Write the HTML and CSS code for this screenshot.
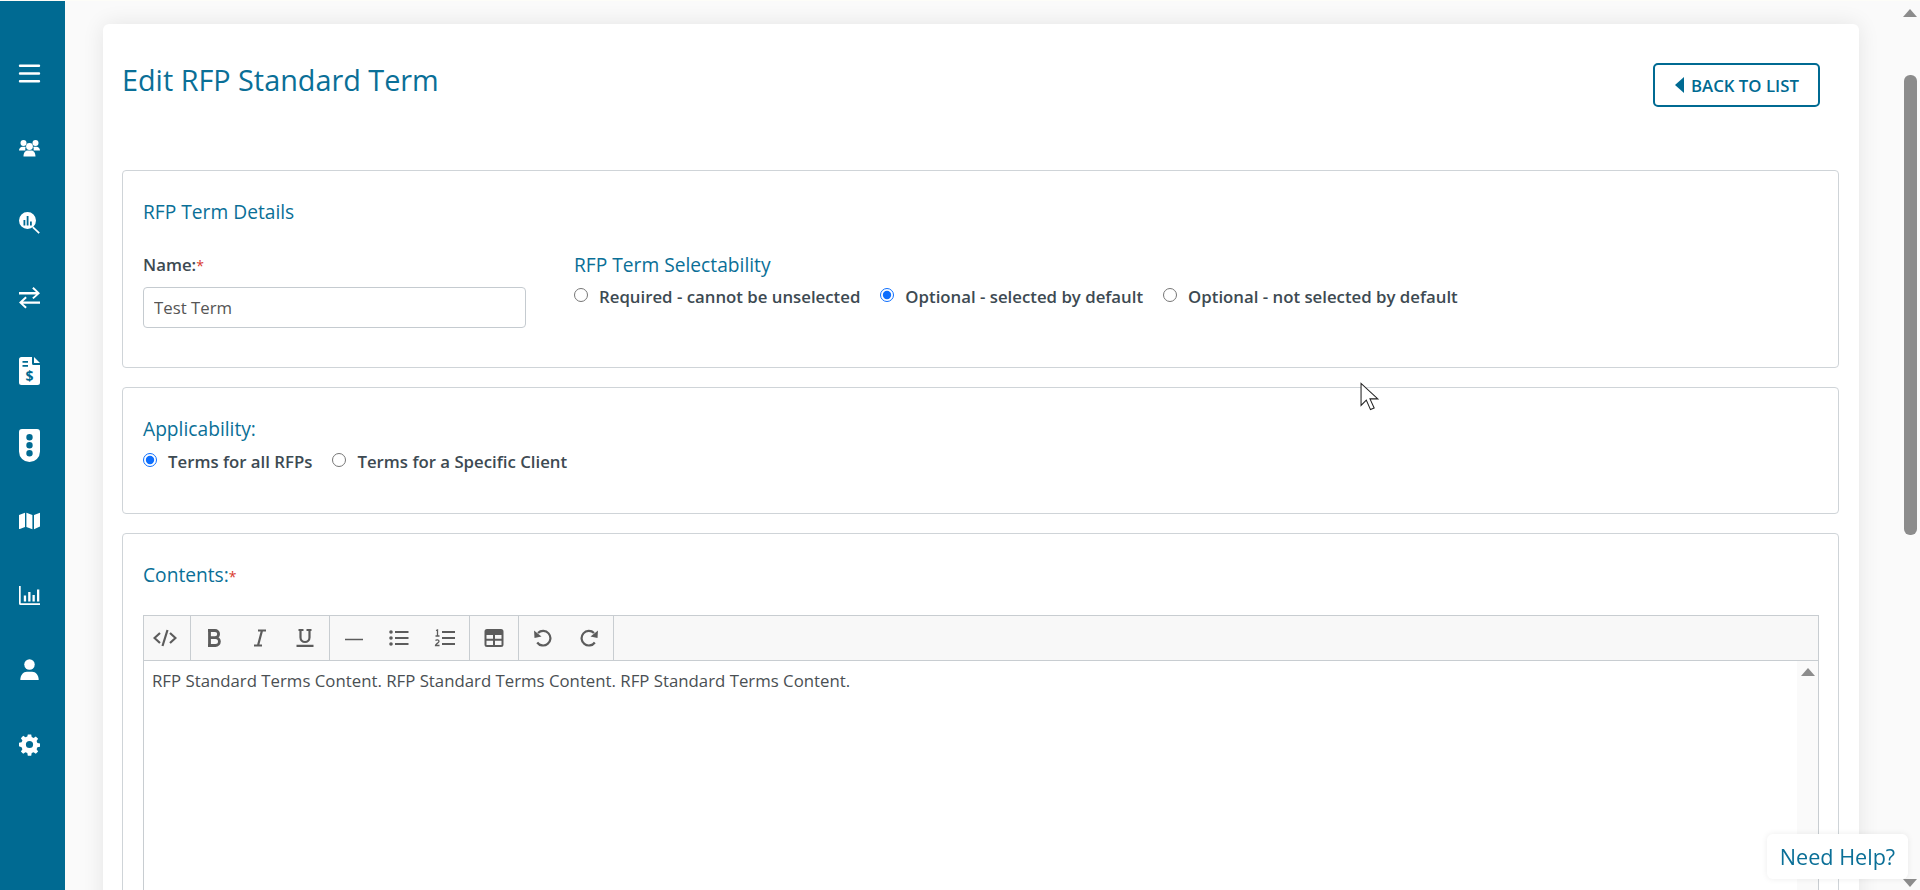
FILE: index.html
```html
<!DOCTYPE html>
<html lang="en">
<head>
<meta charset="utf-8">
<title>Edit RFP Standard Term</title>
<link rel="stylesheet" href="styles.css">
</head>
<body>
<div class="app">
  <nav class="sidebar">
    <svg class="nav-icon" viewBox="0 0 21 21"><path d="M1 1.500h19a1.200 1.200 0 0 1 0 2.400H1a1.200 1.200 0 0 1 0-2.400zm0 7.800h19a1.200 1.200 0 0 1 0 2.400H1a1.200 1.200 0 0 1 0-2.400zm0 7.800h19a1.200 1.200 0 0 1 0 2.400H1a1.200 1.200 0 0 1 0-2.400z"/></svg>
    <svg class="nav-icon" viewBox="0 0 21 21"><circle cx="4.500" cy="5" r="3"/><circle cx="16.500" cy="5" r="3"/><circle cx="10.500" cy="8.500" r="3.400"/><path d="M0 12.500c0-2.500 1.800-3.800 3.600-3.800h2c.5 0 .9.100 1.200.3-.6 1-.7 2.300-.3 3.500zM21 12.500c0-2.500-1.800-3.800-3.600-3.800h-2c-.5 0-.9.100-1.200.3.600 1 .7 2.300.3 3.500zM4.500 18.500c0-3.800 1.800-6 4-6h4c2.200 0 4 2.200 4 6z"/></svg>
    <svg class="nav-icon" viewBox="0 0 21 21"><path fill-rule="evenodd" d="M8.500 0a8.500 8.500 0 1 1 0 17 8.500 8.500 0 0 1 0-17zM7.700 4v9.500h1.800V4zM4.500 8v5.500h1.800V8zm6.500 1.500v4h1.800v-4z"/><path d="M14.400 14.600l6.400 5.900-1.200 1.300-6.400-6z"/></svg>
    <svg class="nav-icon" viewBox="0 0 21 21"><path d="M0 5h17l-3.800-3.500L14.600.1 21 6.200l-6.400 5.900-1.400-1.400L17 7.400H0zM21 14.400H4l3.800-3.500-1.400-1.400L0 15.600l6.400 5.900 1.400-1.400L4 16.800h17z"/></svg>
    <svg class="nav-icon tall" viewBox="0 0 21 28"><path fill-rule="evenodd" d="M2.500 0H13v6.500a1.500 1.500 0 0 0 1.500 1.500H21v17.500a2.500 2.500 0 0 1-2.500 2.500h-16A2.500 2.500 0 0 1 0 25.500v-23A2.500 2.500 0 0 1 2.500 0zM3.500 4v1.800H9V4zm0 4v1.800H9V8z"/><path d="M15 0l6 6h-6z"/><text x="10.500" y="23.500" class="dollar">$</text></svg>
    <svg class="nav-icon light" viewBox="0 0 21 33"><path fill-rule="evenodd" d="M3 0h15a3 3 0 0 1 3 3v19.500a10.500 10.500 0 0 1-21 0V3a3 3 0 0 1 3-3zm7.500 5a3.200 3.200 0 1 0 0 6.400 3.200 3.200 0 0 0 0-6.400zm0 8a3.200 3.200 0 1 0 0 6.400 3.200 3.200 0 0 0 0-6.400zm0 8a3.200 3.200 0 1 0 0 6.400 3.200 3.200 0 0 0 0-6.400z"/></svg>
    <svg class="nav-icon" viewBox="0 0 21 21"><path d="M0 5l6-2.200v14.300L.8 19a.6.600 0 0 1-.8-.5zM7.400 2.800l6 2.300v14.100l-6-2.200zM21 2.800v13.600l-6 2.800V5z"/></svg>
    <svg class="nav-icon" viewBox="0 0 21 21"><path d="M0 1h1.700v17.300H21V20H1.500A1.500 1.500 0 0 1 0 18.500zM4.800 10.500h2.300v6H4.800zM9.200 7h2.300v9.500H9.200zM13.500 10h2.300v6.500h-2.300zM18 4.500h2.300v12H18z"/></svg>
    <svg class="nav-icon" viewBox="0 0 21 24"><circle cx="10.500" cy="6.300" r="6"/><path d="M0 24c0-6 3.500-9.500 7.500-9.500h6c4 0 7.500 3.500 7.500 9.500z"/></svg>
    <svg class="nav-icon" viewBox="0 0 21 21"><path fill-rule="evenodd" d="M8.800.5h3.400l.5 2.600 1.900.8 2.200-1.500 2.300 2.400-1.500 2.200.8 1.900 2.600.5v3.400l-2.600.5-.8 1.900 1.500 2.200-2.300 2.400-2.200-1.500-1.900.8-.5 2.600H8.800l-.5-2.600-1.900-.8-2.200 1.500-2.300-2.400 1.500-2.200-.8-1.900L0 12.200V8.800l2.600-.5.800-1.900-1.500-2.200 2.300-2.400 2.200 1.500 1.900-.8zm1.700 6.400a3.600 3.600 0 1 0 0 7.200 3.600 3.600 0 0 0 0-7.200z"/></svg>
  </nav>

  <main class="content">
    <div class="card">
      <header class="page-head">
        <h1 class="page-title">Edit RFP Standard Term</h1>
        <a class="back-btn" href="#"><span class="back-arrow"></span>BACK TO LIST</a>
      </header>

      <section class="panel panel-details">
        <h2 class="panel-title">RFP Term Details</h2>
        <div class="details-row">
          <div class="name-col">
            <label class="field-label" for="term-name">Name:<span class="req">*</span></label>
            <input class="text-input" id="term-name" type="text" value="Test Term">
          </div>
          <div class="select-col">
            <div class="group-title small">RFP Term Selectability</div>
            <div class="radio-row">
              <label class="radio"><input type="radio" name="sel">Required - cannot be unselected</label>
              <label class="radio"><input type="radio" name="sel" checked>Optional - selected by default</label>
              <label class="radio"><input type="radio" name="sel">Optional - not selected by default</label>
            </div>
          </div>
        </div>
      </section>

      <section class="panel panel-apply">
        <div class="group-title">Applicability:</div>
        <div class="radio-row">
          <label class="radio"><input type="radio" name="app" checked>Terms for all RFPs</label>
          <label class="radio"><input type="radio" name="app">Terms for a Specific Client</label>
        </div>
      </section>

      <section class="panel panel-contents">
        <div class="group-title">Contents:<span class="req">*</span></div>
        <div class="editor">
          <div class="toolbar">
            <div class="tool-group">
              <button class="tool tool-code" type="button"><svg viewBox="0 0 24 18"><path d="M7 4L1.500 9 7 14M17 4l5.500 5-5.500 5M14.500 1l-5 16" class="ln"/></svg></button>
            </div>
            <div class="tool-group">
              <button class="tool" type="button"><svg viewBox="0 0 24 18"><path class="ln bold" d="M6 1.500h7a3.600 3.600 0 0 1 0 7.200H7.500h6a3.900 3.900 0 0 1 0 7.800H6M7.500 1.500v15"/></svg></button>
              <button class="tool" type="button"><svg viewBox="0 0 24 18"><path class="ln" d="M10 1.500h8M6 16.500h8M14 1.500l-4 15"/></svg></button>
              <button class="tool" type="button"><svg viewBox="0 0 24 18"><path class="ln" d="M5.500 1h5M13.500 1h5M7.500 1v7.500a4.500 4.500 0 0 0 9 0V1M3.500 16.800h17"/></svg></button>
            </div>
            <div class="tool-group">
              <button class="tool" type="button"><svg viewBox="0 0 24 18"><path class="ln hr" d="M3 10.500h18"/></svg></button>
              <button class="tool" type="button"><svg viewBox="0 0 24 18"><path class="ln" d="M8 3h13.500M8 9h13.500M8 15h13.500"/><circle cx="4" cy="3" r="1.800"/><circle cx="4" cy="9" r="1.800"/><circle cx="4" cy="15" r="1.800"/></svg></button>
              <button class="tool" type="button"><svg viewBox="0 0 24 18"><path class="ln" d="M9 3h13M9 9h13M9 15h13"/><path class="thin" d="M3 1.500l1.500-.5v6M2.500 7h4M2.500 11.500c1-1 3.500-.8 3.500.8 0 1.700-3.500 2.500-3.500 4.200h4"/></svg></button>
            </div>
            <div class="tool-group wide">
              <button class="tool" type="button"><svg viewBox="0 0 24 18"><path fill-rule="evenodd" d="M5 0h14a2.500 2.500 0 0 1 2.500 2.500v13A2.500 2.500 0 0 1 19 18H5a2.500 2.500 0 0 1-2.500-2.500v-13A2.500 2.500 0 0 1 5 0zM4.500 6v3.700H11V6zm8.500 0v3.700h6.500V6zM4.500 11.700V16H11v-4.300zm8.500 0V16h6.500v-4.300z"/></svg></button>
            </div>
            <div class="tool-group wide">
              <button class="tool" type="button"><svg viewBox="0 0 24 18"><path class="ln" d="M7 4a7.300 7.300 0 1 1-.800 9.500"/><path d="M3 1.500l.5 7.500 7-1.500z"/></svg></button>
              <button class="tool" type="button"><svg viewBox="0 0 24 18"><path class="ln" d="M17 4a7.300 7.300 0 1 0 .8 9.500"/><path d="M21 1.500l-.5 7.500-7-1.500z"/></svg></button>
            </div>
          </div>
          <div class="editor-body">
            <p class="editor-text">RFP Standard Terms Content. RFP Standard Terms Content. RFP Standard Terms Content.</p>
            <div class="editor-scroll"><span class="arrow-up"></span></div>
          </div>
        </div>
      </section>
    </div>
  </main>

  <aside class="page-scroll">
    <span class="arrow-up"></span>
    <div class="thumb"></div>
    <span class="arrow-down"></span>
  </aside>
</div>

<svg class="cursor" viewBox="0 0 20 28"><path d="M1 1v21l5-5 4 9 3.500-1.500-4-8.700H17z" fill="#fff" stroke="#222" stroke-width="1"/></svg>
<a class="help" href="#">Need Help?</a>
</body>
</html>
```

FILE: styles.css
```css
* { box-sizing: border-box; }
html, body { margin: 0; height: 100%; overflow: hidden; }
body {
  font-family: "Open Sans", "Liberation Sans", sans-serif;
  background: #fafafa;
  color: #3d4a52;
  border-top: 1px solid #fdfdf8;
}
.app { display: flex; height: 889px; overflow: hidden; }

.sidebar {
  flex: 0 0 65px;
  background: #006a92;
  display: flex;
  flex-direction: column;
  align-items: center;
  padding: 62px 6px 0 0;
}
.nav-icon { width: 21px; height: 21px; margin-bottom: 53.500px; fill: #fff; flex: none; overflow: visible; }
.nav-icon.tall { height: 28px; margin-top: -4px; margin-bottom: 49.500px; }
.nav-icon.light { height: 33px; margin-top: -6px; margin-bottom: 48.500px; }
.dollar { font: 700 14px "Open Sans", sans-serif; fill: #006a92; text-anchor: middle; }

.content { flex: 1; min-width: 0; padding: 23px 0 0 38px; }
.card {
  width: 1756px;
  height: 1000px;
  background: #fff;
  border-radius: 6px;
  box-shadow: 0 0 22px rgba(0, 0, 0, .09);
  padding: 0 20px 0 19px;
}

.page-head {
  display: flex;
  justify-content: space-between;
  align-items: flex-start;
  height: 146px;
  padding: 37px 19px 0 0;
}
.page-title { margin: 0; font-size: 28.800px; font-weight: 400; line-height: 38px; color: #0a6f97; }
.back-btn {
  display: flex;
  align-items: center;
  width: 167px;
  height: 44px;
  margin-top: 2px;
  padding-left: 20px;
  border: 2px solid #006a92;
  border-radius: 5px;
  color: #006a92;
  font-size: 16.800px;
  font-weight: 600;
  text-decoration: none;
}
.back-arrow {
  width: 0; height: 0;
  margin-right: 7px;
  border-style: solid;
  border-width: 8px 9px 8px 0;
  border-color: transparent #006a92 transparent transparent;
}

.panel {
  border: 1px solid #cfd4d8;
  border-radius: 4px;
  padding: 0 20px;
  margin-bottom: 19px;
  background: #fff;
}
.panel-details { height: 198px; padding-top: 29px; }
.panel-apply { height: 127px; padding-top: 29px; }
.panel-contents { height: 600px; padding-top: 29px; }

.panel-title { margin: 0 0 30px; font-size: 19.200px; font-weight: 400; line-height: 24px; color: #0a6f97; }
.details-row { display: flex; gap: 48px; }
.name-col { width: 383px; }
.field-label { display: block; font-size: 16.800px; font-weight: 600; line-height: 22px; margin-bottom: 10px; color: #3d4a52; }
.req { color: #d9392c; font-weight: 400; font-size: 14px; }
.text-input {
  display: block;
  width: 100%;
  height: 41px;
  padding: 0 10px;
  border: 1px solid #c5cbd0;
  border-radius: 4px;
  font: 400 16.800px "Open Sans", sans-serif;
  color: #555;
  background: #fff;
}
.group-title { font-size: 19.200px; line-height: 24px; color: #0a6f97; margin-bottom: 9px; }
.group-title.small { margin-top: -1px; margin-bottom: 8px; }
.radio-row { display: flex; gap: 20px; }
.radio {
  display: flex;
  align-items: flex-start;
  font-size: 16.800px;
  font-weight: 600;
  line-height: 24px;
  color: #3d4a52;
}
.radio input { width: 14px; height: 14px; margin: 3px 11px 0 0; flex: none; accent-color: #0d6efd; }

.panel-contents .group-title { margin-bottom: 26px; }
.editor { border: 1px solid #c8cdd1; height: 500px; width: 1676px; }
.toolbar {
  display: flex;
  height: 45px;
  background: #f8f8f8;
  border-bottom: 1px solid #c8cdd1;
}
.tool-group { display: flex; border-right: 1px solid #c8cdd1; }
.tool-group:nth-child(2), .tool-group:nth-child(3) { padding: 0 1px; }
.tool-group.wide { padding: 0 1.500px; }
.tool {
  width: 45.500px;
  height: 44px;
  padding: 0;
  border: 0;
  background: none;
  display: flex;
  align-items: center;
  justify-content: center;
}
.tool-code { padding-right: 4px; }
.tool svg { width: 24px; height: 18px; fill: #5c5c5c; }
.ln { fill: none; stroke: #5c5c5c; stroke-width: 2.200; }
.ln.bold { stroke-width: 2.800; }
.ln.hr { stroke-width: 1.500; }
.thin { fill: none; stroke: #5c5c5c; stroke-width: 1.300; }
.editor-body { display: flex; justify-content: space-between; height: 454px; }
.editor-text { margin: 8px 0 0 8px; font-size: 16.800px; line-height: 24px; color: #4a4f53; }
.editor-scroll { width: 21px; background: #fafafa; display: flex; justify-content: center; padding-top: 7px; }

.arrow-up, .arrow-down { width: 0; height: 0; border-style: solid; display: block; flex: none; }
.arrow-up { border-width: 0 7.500px 8px; border-color: transparent transparent #8c8c8c; }
.arrow-down { border-width: 8px 7.500px 0; border-color: #8c8c8c transparent transparent; }

.page-scroll {
  flex: 0 0 20px;
  margin-left: auto;
  display: flex;
  flex-direction: column;
  align-items: center;
  padding: 8px 0 3px;
}
.thumb { width: 13px; height: 460px; margin-top: 58px; background: #8c8c8c; border-radius: 6px; flex: none; }
.page-scroll .arrow-down { margin-top: auto; }

.help {
  position: fixed;
  left: 1767px;
  top: 834px;
  width: 141px;
  height: 45px;
  display: flex;
  align-items: center;
  justify-content: center;
  background: #fff;
  border-radius: 6px;
  box-shadow: 0 0 6px rgba(0, 0, 0, .08);
  color: #0a6f97;
  font-size: 21.600px;
  text-decoration: none;
}
.cursor { position: fixed; left: 1360px; top: 382px; width: 21px; height: 30px; }
```
